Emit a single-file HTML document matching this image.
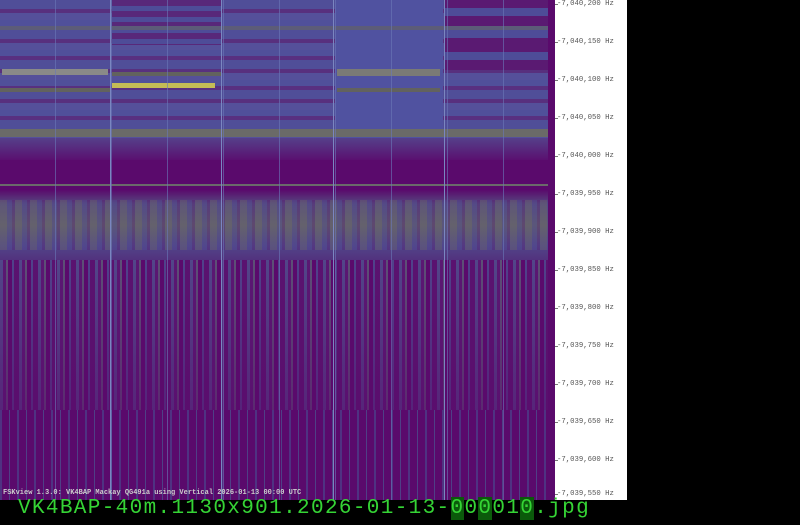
<!DOCTYPE html>
<html><head><meta charset="utf-8"><style>
html,body{margin:0;padding:0;width:800px;height:525px;background:#000;overflow:hidden}
#spec{position:absolute;left:0;top:0;width:555px;height:500px;background:#5a0a6c;overflow:hidden}
.l{position:absolute}
#axis{position:absolute;left:555px;top:0;width:72px;height:500px;background:#fff}
.lab{position:absolute;left:2px;font:7.3px "Liberation Mono",monospace;color:#555;white-space:pre;line-height:8px}
.tk{position:absolute;left:0;width:3px;height:1px;background:#777}
#bar{position:absolute;left:0;top:500px;width:800px;height:25px;background:#000}
#fn{position:absolute;left:18px;top:497px;font:21px "Liberation Mono",monospace;color:#35d435;letter-spacing:1.35px;white-space:pre}
#cap{position:absolute;left:3px;top:489px;font:bold 7px "Liberation Mono",monospace;color:#ccc;white-space:pre}
</style></head><body>
<div id="spec">
 <div class="l" style="left:0;top:0;width:548px;height:160px;background:repeating-linear-gradient(180deg,#504e98 0 9px,#58307e 9px 13px,#55509a 13px 20px,#50509a 20px 26px,#583080 26px 30px);"></div>
 <div class="l" style="left:335px;top:0;width:108px;height:150px;background:#5052a0"></div>
 <div class="l" style="left:112px;top:0;width:110px;height:45px;background:repeating-linear-gradient(180deg,#58287a 0 6px,#4e4c98 6px 11px)"></div>
 <div class="l" style="left:445px;top:0;width:103px;height:70px;background:repeating-linear-gradient(180deg,#5a1a72 0 8px,#4e4c98 8px 16px,#5a1a72 16px 22px)"></div>
 <div class="l" style="left:0;top:138px;width:548px;height:22px;background:linear-gradient(#55408a,#5a1070)"></div>
 <div class="l" style="left:2px;top:69px;width:106px;height:6px;background:#8a8a88"></div>
 <div class="l" style="left:337px;top:69px;width:103px;height:7px;background:#7a7a76"></div>
 <div class="l" style="left:112px;top:83px;width:103px;height:5px;background:#c4bc56"></div>
 <div class="l" style="left:112px;top:72px;width:110px;height:4px;background:#62625e"></div>
 <div class="l" style="left:0;top:88px;width:110px;height:4px;background:#62625e"></div>
 <div class="l" style="left:337px;top:88px;width:103px;height:4px;background:#62625e"></div>
 <div class="l" style="left:0;top:129px;width:548px;height:8px;background:#6a6a68"></div>
 <div class="l" style="left:0;top:26px;width:548px;height:4px;background:#5c5c78"></div>
 <div class="l" style="left:0;top:190px;width:548px;height:70px;background:linear-gradient(rgba(90,10,108,1),rgba(85,80,130,.9) 20%,rgba(95,95,110,.95) 50%,rgba(80,75,140,.9) 80%,rgba(80,60,130,.8))"></div>
 <div class="l" style="left:0;top:200px;width:548px;height:50px;background:repeating-linear-gradient(90deg,rgba(110,110,105,.35) 0 7px,rgba(80,76,150,.3) 7px 12px,rgba(90,20,110,.25) 12px 15px)"></div>
 <div class="l" style="left:0;top:260px;width:548px;height:150px;background:repeating-linear-gradient(90deg,#50508e 0 3px,#5a1a74 3px 6px,#5c5c78 6px 8px,#5a0a6c 8px 12px,#4e4c90 12px 14px,#5a1470 14px 19px);opacity:.85"></div>
 <div class="l" style="left:0;top:260px;width:548px;height:150px;background:linear-gradient(rgba(90,10,108,0),rgba(90,10,108,.55))"></div>
 <div class="l" style="left:0;top:410px;width:548px;height:90px;background:repeating-linear-gradient(90deg,#4c3c88 0 2px,#5a0a6c 2px 9px,#4c4c8c 9px 10px,#5a0a6c 10px 17px);opacity:.8"></div>
 <div class="l" style="left:0;top:184px;width:548px;height:2px;background:#6a6a6a"></div>
 <div class="l" style="left:0;top:0;width:548px;height:500px;background:repeating-linear-gradient(90deg,transparent 0 55px,rgba(106,120,184,.6) 55px 56px)"></div>
 <div class="l" style="left:110px;top:0;width:1px;height:500px;background:#7a86c0"></div>
 <div class="l" style="left:221px;top:0;width:1px;height:500px;background:#7a86c0"></div>
 <div class="l" style="left:333px;top:0;width:1px;height:500px;background:#7a86c0"></div>
 <div class="l" style="left:444px;top:0;width:1px;height:500px;background:#7a86c0"></div>
 <div class="l" style="left:548px;top:0;width:7px;height:500px;background:#5a0a6c"></div>
 <div id="cap">FSKview 1.3.0: VK4BAP Mackay QG491a using Vertical 2026-01-13 00:00 UTC</div>
</div>
<div id="axis">
 <div class="tk" style="top:4px"></div><div class="lab" style="top:0">-7,040,200 Hz</div>
 <div class="tk" style="top:42px"></div><div class="lab" style="top:38px">-7,040,150 Hz</div>
 <div class="tk" style="top:80px"></div><div class="lab" style="top:76px">-7,040,100 Hz</div>
 <div class="tk" style="top:118px"></div><div class="lab" style="top:114px">-7,040,050 Hz</div>
 <div class="tk" style="top:156px"></div><div class="lab" style="top:152px">-7,040,000 Hz</div>
 <div class="tk" style="top:194px"></div><div class="lab" style="top:190px">-7,039,950 Hz</div>
 <div class="tk" style="top:232px"></div><div class="lab" style="top:228px">-7,039,900 Hz</div>
 <div class="tk" style="top:270px"></div><div class="lab" style="top:266px">-7,039,850 Hz</div>
 <div class="tk" style="top:308px"></div><div class="lab" style="top:304px">-7,039,800 Hz</div>
 <div class="tk" style="top:346px"></div><div class="lab" style="top:342px">-7,039,750 Hz</div>
 <div class="tk" style="top:384px"></div><div class="lab" style="top:380px">-7,039,700 Hz</div>
 <div class="tk" style="top:422px"></div><div class="lab" style="top:418px">-7,039,650 Hz</div>
 <div class="tk" style="top:460px"></div><div class="lab" style="top:456px">-7,039,600 Hz</div>
 <div class="tk" style="top:494px"></div><div class="lab" style="top:490px">-7,039,550 Hz</div>
</div>
<div id="bar"></div>
<div id="fn">VK4BAP-40m.1130x901.2026-01-13-<span style="background:#0b5a0b">0</span>0<span style="background:#0b5a0b">0</span>01<span style="background:#0b5a0b">0</span>.jpg</div>
</body></html>
